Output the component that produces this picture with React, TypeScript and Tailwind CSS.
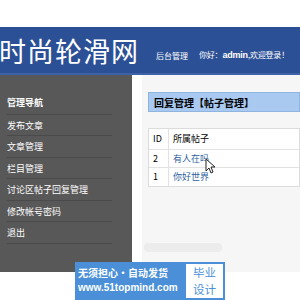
const menu = ['发布文章', '文章管理', '栏目管理', '讨论区帖子回复管理', '修改帐号密码', '退出'];

const rows = [
  { id: 2, title: '有人在吗' },
  { id: 1, title: '你好世界' },
];

export default function App() {
  return (
    <div className="relative w-[300px] h-[300px] overflow-hidden bg-white font-['Noto_Sans_CJK_SC','Noto_Sans',sans-serif]">
      <div className="h-[27px] bg-white" />

      {/* header */}
      <div className="h-[48px] bg-[#2c5096] border-b-[2px] border-[#3d62a8] flex items-center whitespace-nowrap">
        <div className="text-white text-[27px] leading-none tracking-[1px] -ml-[1px] w-[157px] shrink-0">时尚轮滑网</div>
        <div className="text-white text-[8px] mt-[12px]">后台管理</div>
        <div className="text-white text-[8px] mt-[12px] ml-[11px] tracking-[-0.2px]">
          你好：<span className="font-bold font-['Liberation_Sans',sans-serif] text-[9px]">admin</span>,欢迎登录！
        </div>
      </div>

      <div className="flex h-[197px]">
        {/* sidebar */}
        <div className="w-[132px] bg-[#585858] pt-[21px] pl-[7px]">
          <div className="text-white text-[9px] font-bold pb-[4px] w-[105px] border-b border-[#4a4a4a]">管理导航</div>
          {menu.map((m) => (
            <div key={m} className="text-white text-[9px] leading-[12px] pt-[5px] pb-[3.5px] w-[105px] border-b border-[#4a4a4a]">
              {m}
            </div>
          ))}
        </div>

        {/* main */}
        <div className="flex-1 bg-white pl-[10px]">
          <div className="h-full bg-[#f6f6f6] pl-[6px] pt-[17px]">
            <div className="h-[20px] bg-[#a9c9f0] border border-[#8fb4e0] flex items-center pl-[5px] text-[10px] font-bold text-black">
              回复管理【帖子管理】
            </div>
            <div className="mt-[16px] bg-white border border-[#dcdcdc] text-[9px]">
              <div className="flex h-[21px] items-center border-b border-[#e2e2e2]">
                <div className="w-[20px] pl-[4px] h-full flex items-center border-r border-[#e2e2e2]">ID</div>
                <div className="pl-[4px]">所属帖子</div>
              </div>
              {rows.map((r, i) => (
                <div key={r.id} className={`flex h-[18px] items-center ${i === 0 ? 'border-b border-[#e2e2e2]' : ''}`}>
                  <div className="w-[20px] pl-[4px] h-full flex items-center border-r border-[#e2e2e2]">{r.id}</div>
                  <div className="pl-[4px] text-[#2f5f9e]">{r.title}</div>
                </div>
              ))}
            </div>
            <div className="mt-[56px] ml-[-4px] w-[78px] h-[9px] rounded bg-[#ececec]" />
          </div>
        </div>
      </div>

      {/* cursor */}
      <svg className="absolute left-[205px] top-[158px]" width="10" height="16" viewBox="0 0 10 16">
        <path d="M1 1 L1 13 L4 10 L6 15 L8 14 L6 9 L10 9 Z" fill="white" stroke="#222" strokeWidth="1" />
      </svg>

      {/* watermark */}
      <div className="absolute left-[75px] top-[262px] flex whitespace-nowrap">
        <div className="w-[109px] h-[38px] bg-[#4a8fd8] text-white pl-[3px] pt-[3px] overflow-hidden">
          <div className="text-[10px] leading-[15px] font-bold">无须担心·自动发货</div>
          <div className="text-[10px] leading-[16px] font-bold font-['Liberation_Sans',sans-serif]">www.51topmind.com</div>
        </div>
        <div className="w-[41px] h-[38px] bg-white border-[2px] border-[#4a8fd8] text-[#4a8fd8] text-[11.5px] leading-[17px] text-center">
          毕业<br />设计
        </div>
      </div>
    </div>
  );
}
